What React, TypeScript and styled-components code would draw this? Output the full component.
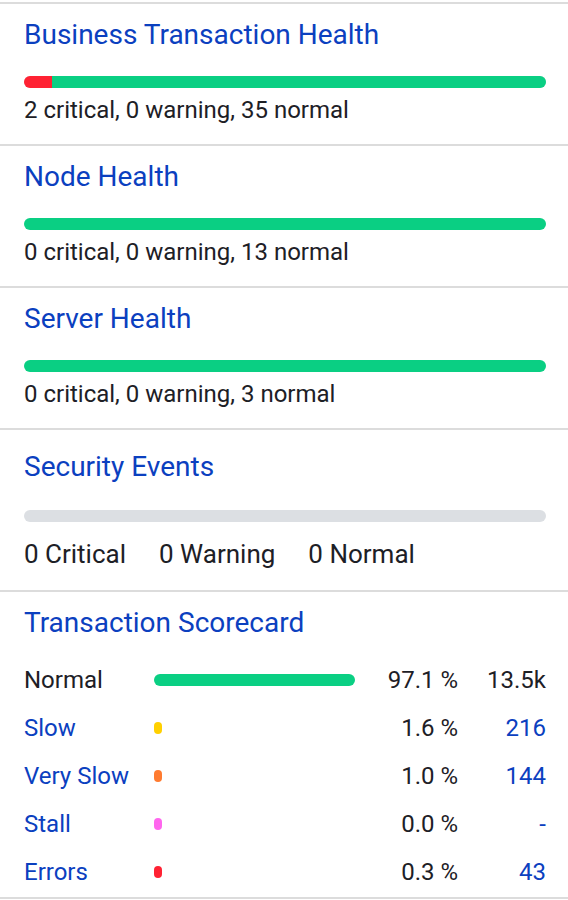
import React from "react";
import styled, { createGlobalStyle } from "styled-components";

const GlobalStyle = createGlobalStyle`
  body {
    margin: 0;
    background: #fff;
    font-family: Roboto, "Liberation Sans", Arial, sans-serif;
    color: #1d2026;
  }
`;

const Panel = styled.div`
  width: 568px;
  padding-top: 2px;
`;

const Section = styled.section<{ $top?: number; $bottom?: number }>`
  border-top: 2px solid #dcdcdc;
  padding: ${(p) => p.$top ?? 15}px 22px ${(p) => p.$bottom ?? 20}px 24px;
  &:last-child {
    border-bottom: 2px solid #dcdcdc;
  }
`;

const Title = styled.h2`
  margin: 0;
  font-size: 28px;
  line-height: 32px;
  font-weight: 400;
  color: #0b40bf;
`;

const Track = styled.div<{ $gap: number }>`
  display: flex;
  height: 12px;
  margin-top: ${(p) => p.$gap}px;
  border-radius: 6px;
  overflow: hidden;
  background: #dcdfe3;
`;

const Segment = styled.div<{ $color: string }>`
  background: ${(p) => p.$color};
  height: 100%;
`;

const Summary = styled.div<{ $gap: number; $size?: number }>`
  margin-top: ${(p) => p.$gap}px;
  font-size: ${(p) => p.$size ?? 24}px;
  line-height: 28px;
  display: flex;
  gap: 33px;
`;

const ScoreGrid = styled.div`
  margin-top: 17px;
  display: grid;
  grid-template-columns: 130px 207px 97px 88px;
  grid-auto-rows: 48px;
  align-items: center;
  font-size: 24px;
`;

const Label = styled.div<{ $link?: boolean }>`
  color: ${(p) => (p.$link ? "#0b40bf" : "#1d2026")};
`;

const Num = styled.div<{ $link?: boolean }>`
  text-align: right;
  color: ${(p) => (p.$link ? "#0b40bf" : "#1d2026")};
`;

const ScoreBar = styled.div<{ $color: string }>`
  height: 12px;
  min-width: 8px;
  border-radius: 6px;
  background: ${(p) => p.$color};
`;

const GREEN = "#0acf83";
const RED = "#ff2233";

interface Health {
  title: string;
  critical: number;
  warning: number;
  normal: number;
}

const healths: Health[] = [
  { title: "Business Transaction Health", critical: 2, warning: 0, normal: 35 },
  { title: "Node Health", critical: 0, warning: 0, normal: 13 },
  { title: "Server Health", critical: 0, warning: 0, normal: 3 },
];

const scores = [
  { label: "Normal", pct: 97.1, count: "13.5k", color: GREEN, link: false },
  { label: "Slow", pct: 1.6, count: "216", color: "#ffd000", link: true },
  { label: "Very Slow", pct: 1.0, count: "144", color: "#ff7b30", link: true },
  { label: "Stall", pct: 0.0, count: "-", color: "#ff66ee", link: true },
  { label: "Errors", pct: 0.3, count: "43", color: RED, link: true },
];

const HealthBlock = ({ title, critical, warning, normal }: Health) => {
  const total = critical + warning + normal;
  return (
    <Section>
      <Title>{title}</Title>
      <Track $gap={25}>
        {critical > 0 && <Segment $color={RED} style={{ width: `${(critical / total) * 100}%` }} />}
        {warning > 0 && <Segment $color="#ffd000" style={{ width: `${(warning / total) * 100}%` }} />}
        <Segment $color={GREEN} style={{ flex: 1 }} />
      </Track>
      <Summary $gap={8}>{`${critical} critical, ${warning} warning, ${normal} normal`}</Summary>
    </Section>
  );
};

export default function App() {
  return (
    <>
      <GlobalStyle />
      <Panel>
        {healths.map((h) => (
          <HealthBlock key={h.title} {...h} />
        ))}
        <Section $top={21} $bottom={22}>
          <Title>Security Events</Title>
          <Track $gap={27} />
          <Summary $gap={18} $size={26}>
            <span>0 Critical</span>
            <span>0 Warning</span>
            <span>0 Normal</span>
          </Summary>
        </Section>
        <Section $top={15} $bottom={1}>
          <Title>Transaction Scorecard</Title>
          <ScoreGrid>
            {scores.map((s) => (
              <React.Fragment key={s.label}>
                <Label $link={s.link}>{s.label}</Label>
                <div>
                  <ScoreBar $color={s.color} style={{ width: `${s.pct}%` }} />
                </div>
                <Num>{s.pct.toFixed(1)} %</Num>
                <Num $link={s.link}>{s.count}</Num>
              </React.Fragment>
            ))}
          </ScoreGrid>
        </Section>
      </Panel>
    </>
  );
}
